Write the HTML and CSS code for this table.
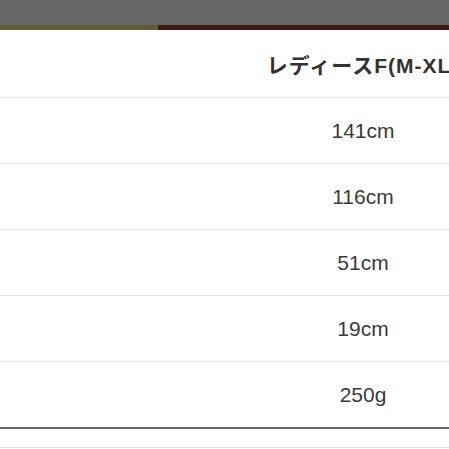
FILE: index.html
```html
<!DOCTYPE html>
<html lang="ja">
<head>
<meta charset="utf-8">
<link rel="stylesheet" href="styles.css">
</head>
<body>
<div class="top">
  <div class="band"></div>
  <div class="strip"><div class="olive"></div><div class="red"></div></div>
</div>
<div class="table">
  <div class="row head"><div class="label"></div><div class="cell">レディースF(M-XL)</div></div>
  <div class="row"><div class="label"></div><div class="cell">141cm</div></div>
  <div class="row"><div class="label"></div><div class="cell">116cm</div></div>
  <div class="row"><div class="label"></div><div class="cell">51cm</div></div>
  <div class="row"><div class="label"></div><div class="cell">19cm</div></div>
  <div class="row last"><div class="label"></div><div class="cell">250g</div></div>
  <div class="row tail"></div>
</div>
</body>
</html>
```
FILE: styles.css
```css
html, body { margin: 0; padding: 0; }
body {
  width: 449px;
  height: 449px;
  overflow: hidden;
  background: #fff;
  font-family: "Liberation Sans", Arial, "Noto Sans CJK JP", sans-serif;
  color: #333;
}
.top { display: flex; flex-direction: column; }
.band { height: 25px; background: #676767; }
.strip { height: 5px; display: flex; }
.olive { width: 158px; background: #5f5c33; }
.red { flex: 1; background: #3f1818; }
.table { display: flex; flex-direction: column; }
.row {
  display: flex;
  height: 65px;
  border-bottom: 1px solid #e3e3e3;
  align-items: center;
}
.row.head { height: 67px; }
.row.last { border-bottom: 2px solid #666; height: 65px; }
.row.tail { height: 18px; border-bottom: 1px solid #e0e0e0; }
.label { width: 277px; flex: none; }
.cell {
  width: 172px;
  flex: none;
  display: flex;
  justify-content: center;
  white-space: nowrap;
  font-size: 21px;
  color: #3a3a3a;
}
.head .cell { font-weight: bold; color: #333; letter-spacing: 1px; }
```
